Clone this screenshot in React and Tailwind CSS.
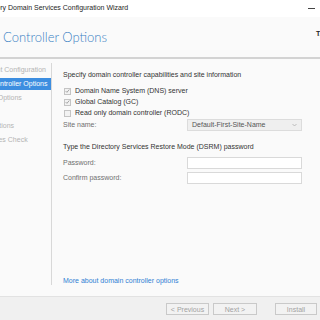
import { useState } from 'react'

const navItems = [
  { label: 'Deployment Configuration' },
  { label: 'Domain Controller Options', active: true },
  { label: 'Additional Options' },
  { label: 'Paths' },
  { label: 'Review Options' },
  { label: 'Prerequisites Check' },
  { label: 'Installation' },
  { label: 'Results' },
]

function CheckBox({ checked }) {
  return (
    <div className="w-[7px] h-[7px] ml-px border border-[#c4c4c4] bg-[#f2f2f2] flex items-center justify-center shrink-0">
      {checked && (
        <svg width="6" height="6" viewBox="0 0 6 6" fill="none">
          <path d="M0.8 3.1 L2.3 4.6 L5.2 1.2" stroke="#8a8a8a" strokeWidth="0.9" />
        </svg>
      )}
    </div>
  )
}

export default function App() {
  const [password, setPassword] = useState('')
  const [confirm, setConfirm] = useState('')

  return (
    <div className="w-[320px] h-[320px] overflow-hidden bg-[#fafafa] flex flex-col font-['Liberation_Sans',Arial,sans-serif] text-[7px] text-[#333]">
      {/* Window title bar */}
      <div className="h-[17px] bg-white flex items-center shrink-0">
        <div className="-ml-[43px] whitespace-nowrap text-[#1e1e1e]">
          Active Directory Domain Services Configuration Wizard
        </div>
        <div className="flex-1" />
        <div className="w-[7px] h-px bg-[#444] mr-[5px]" />
      </div>

      {/* Page header */}
      <div className="h-[40px] flex items-center shrink-0 bg-[#fafafa] pt-[2px]">
        <div className="w-[3px] flex justify-end whitespace-nowrap shrink-0 text-[13px] font-light text-[#3b82c4] font-['Lato',sans-serif]">
          <span>Domain&nbsp;</span>
        </div>
        <div className="whitespace-nowrap text-[13px] font-light text-[#3b82c4] font-['Lato',sans-serif]">
          Controller Options
        </div>
        <div className="flex-1" />
        <div className="w-[4px] whitespace-nowrap -mt-[8px] text-[#222] font-bold">
          TARGET SERVER
        </div>
      </div>
      <div className="h-[2px] bg-[#d3d3d3] shrink-0" />

      {/* Main area */}
      <div className="flex flex-1 min-h-0">
        <div className="w-[52px] shrink-0 mt-[4px] mb-[11px] border-r border-[#d8d8d8] overflow-hidden flex flex-col gap-[2px] pt-px">
          {navItems.map((item) => (
            <div
              key={item.label}
              className={
                item.active
                  ? 'h-[12px] flex items-center bg-[#3d8ee0] text-white'
                  : 'h-[12px] flex items-center text-[#b4b4b4]'
              }
            >
              <span className="-ml-[35px] whitespace-nowrap">{item.label}</span>
            </div>
          ))}
        </div>

        <div className="flex-1 flex flex-col pl-[11px] pr-[18px] pt-[11px] pb-[10px]">
          <div className="leading-[10px]">Specify domain controller capabilities and site information</div>

          <div className="mt-[6px] flex flex-col gap-px">
            <div className="h-[10px] flex items-center gap-[4px]">
              <CheckBox checked />
              <span>Domain Name System (DNS) server</span>
            </div>
            <div className="h-[10px] flex items-center gap-[4px]">
              <CheckBox checked />
              <span>Global Catalog (GC)</span>
            </div>
            <div className="h-[10px] flex items-center gap-[4px]">
              <CheckBox />
              <span>Read only domain controller (RODC)</span>
            </div>
          </div>

          <div className="mt-px h-[12px] flex items-center">
            <span className="w-[124px] text-[#6f6f6f]">Site name:</span>
            <div className="flex-1 h-full bg-[#efefef] border border-[#dcdcdc] flex items-center justify-between pl-[4px] pr-[4px] text-[#555]">
              <span>Default-First-Site-Name</span>
              <svg width="5" height="4" viewBox="0 0 5 4" fill="none">
                <path d="M0.5 1 L2.5 3 L4.5 1" stroke="#b0b0b0" strokeWidth="0.8" />
              </svg>
            </div>
          </div>

          <div className="mt-[11px] leading-[10px]">Type the Directory Services Restore Mode (DSRM) password</div>

          <div className="mt-[5px] h-[12px] flex items-center">
            <span className="w-[124px] text-[#6f6f6f]">Password:</span>
            <input
              type="password"
              value={password}
              onChange={(e) => setPassword(e.target.value)}
              className="flex-1 h-full bg-white border border-[#d9d9d9] outline-none px-[3px] text-[7px]"
            />
          </div>
          <div className="mt-[3px] h-[12px] flex items-center">
            <span className="w-[124px] text-[#6f6f6f]">Confirm password:</span>
            <input
              type="password"
              value={confirm}
              onChange={(e) => setConfirm(e.target.value)}
              className="flex-1 h-full bg-white border border-[#d9d9d9] outline-none px-[3px] text-[7px]"
            />
          </div>

          <div className="flex-1" />
          <a href="#" className="leading-[10px] text-[#2f7fd4]">More about domain controller options</a>
        </div>
      </div>

      {/* Footer buttons */}
      <div className="h-[24px] shrink-0 bg-[#f0f0f0] border-t border-[#e2e2e2] flex items-start pt-[6px]">
        <div className="w-[166px] shrink-0" />
        <button className="w-[43px] h-[12px] border border-[#c9c9c9] bg-[#f2f2f2] text-[#a2a2a2] text-[7px] leading-none">&lt; Previous</button>
        <button className="ml-[4px] w-[44px] h-[12px] border border-[#c9c9c9] bg-[#f2f2f2] text-[#a2a2a2] text-[7px] leading-none">Next &gt;</button>
        <button className="ml-[18px] w-[42px] h-[12px] border border-[#c9c9c9] bg-[#f2f2f2] text-[#a2a2a2] text-[7px] leading-none">Install</button>
      </div>
    </div>
  )
}
